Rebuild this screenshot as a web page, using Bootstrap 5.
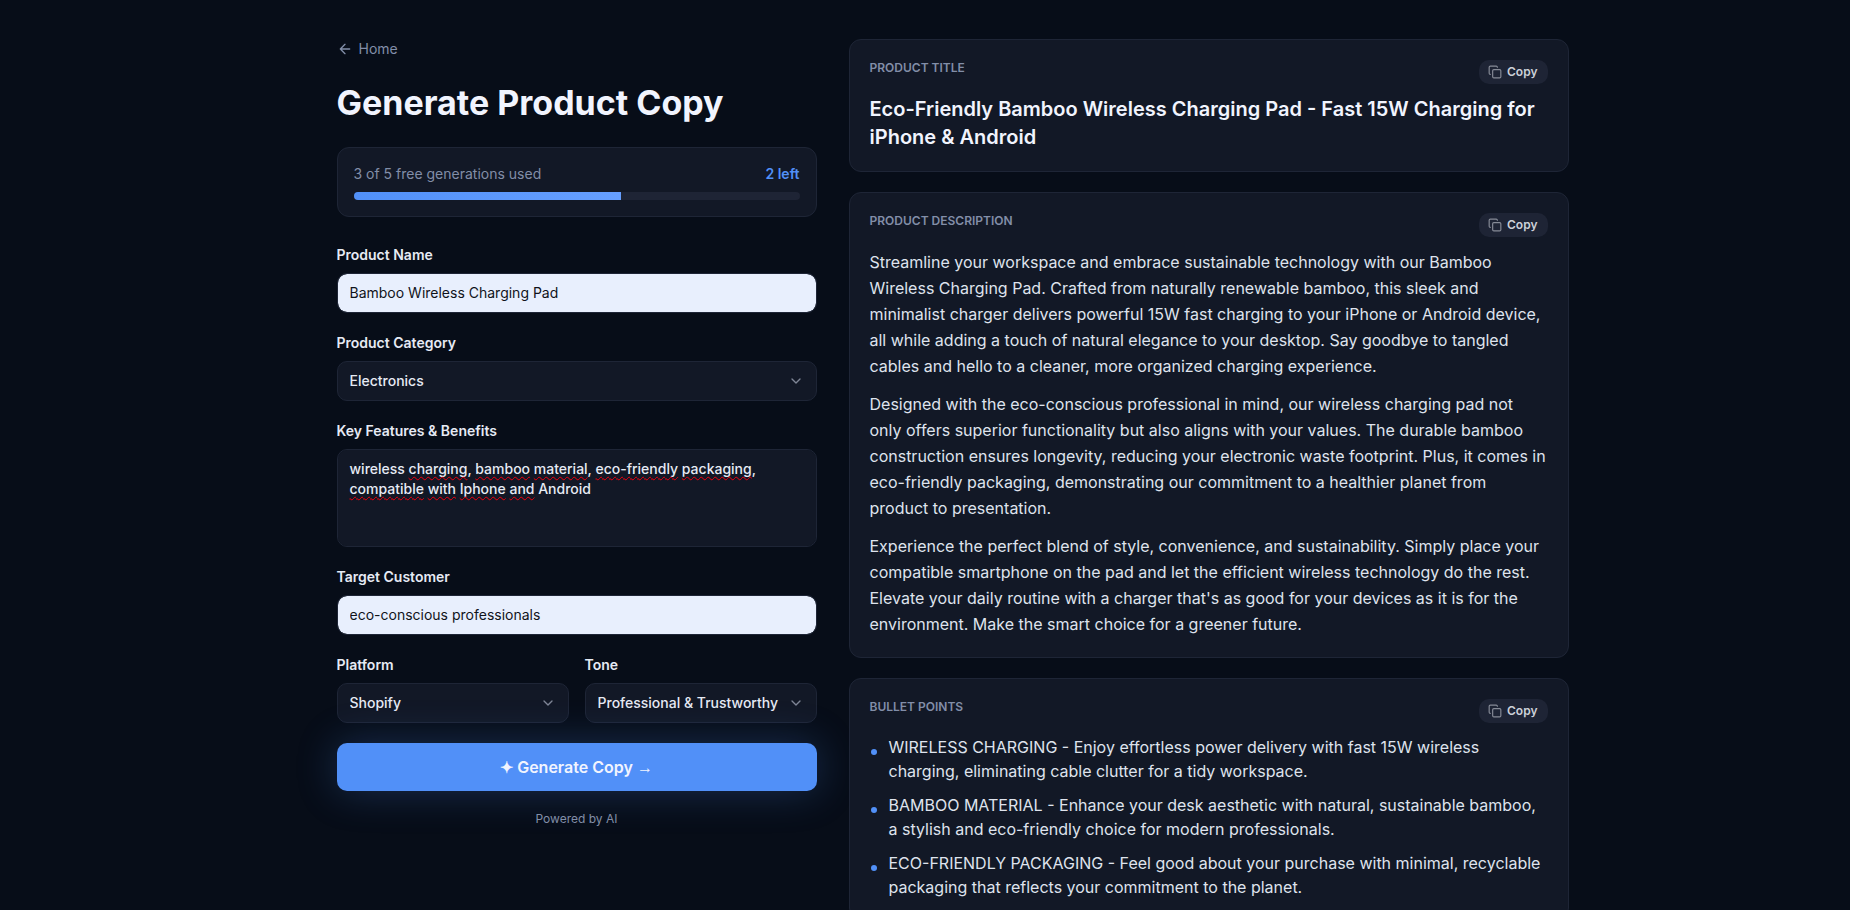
<!DOCTYPE html>
<html lang="en" data-bs-theme="dark">
<head>
<meta charset="utf-8">
<meta name="viewport" content="width=device-width, initial-scale=1">
<title>Generate Product Copy</title>
<link href="https://cdn.jsdelivr.net/npm/bootstrap@5.3.0/dist/css/bootstrap.min.css" rel="stylesheet">
<style>
  :root {
    --page: #070d18;
    --panel: #121826;
    --line: #1e2536;
    --ink: #e6eaf4;
    --dim: #828ea8;
    --accent: #5190f8;
  }
  body { background: var(--page); color: var(--ink); font-family: Inter, "Liberation Sans", sans-serif; font-size: 16px; line-height: 24px; }
  .shell { padding: 39px 24px 40px 79px; }
  .shell-inner { max-width: 1232px; }
  .split { display: grid; grid-template-columns: 2fr 3fr; gap: 32px; align-items: start; }
  .text-dim { color: var(--dim); }
  .fs-sm { font-size: 14px; line-height: 20px; }
  .fs-xs { font-size: 12px; line-height: 16px; }
  .home-link { width: fit-content; color: var(--dim); text-decoration: none; gap: 6px; }
  .page-title { font-size: 34px; line-height: 40px; font-weight: 700; color: #f1f4fe; margin: 24px 0; }
  .panel { background: var(--panel); border: 1px solid var(--line); border-radius: 12px; }
  .usage { padding: 16px; margin-bottom: 28px; }
  .usage .progress { height: 8px; border-radius: 4px; background: #1e2435; }
  .usage .progress-bar { background: linear-gradient(90deg, #5190f8, #669fff); }
  .accent { color: var(--accent); }
  .field-stack { gap: 20px; }
  .form-label { font-size: 14px; line-height: 20px; font-weight: 600; margin-bottom: 8px; display: block; }
  .form-control, .form-select { font-size: 14px; line-height: 20px; padding: 9px 12px; border: 1px solid var(--line); border-radius: 10px; background-color: var(--panel); color: var(--ink); font-weight: 500; }
  .form-select { padding-right: 36px; background-size: 16px 16px; background-position: right 12px center;
    background-image: url("data:image/svg+xml,%3Csvg xmlns='http://www.w3.org/2000/svg' viewBox='0 0 24 24' fill='none' stroke='%237f8696' stroke-width='2' stroke-linecap='round' stroke-linejoin='round'%3E%3Cpath d='m6 9 6 6 6-6'/%3E%3C/svg%3E"); }
  .filled, .filled:focus { background-color: #e8effd; color: #10131a; font-weight: 400; }
  textarea.form-control { height: 98px; resize: none; display: block; }
  .spell-layer { position: absolute; inset: 0; padding: 10px 13px; font-size: 14px; line-height: 20px; font-weight: 500; color: transparent; pointer-events: none; }
  .spell-layer u { text-decoration: underline wavy #f0000c 1px; text-underline-offset: 2px; text-decoration-skip-ink: none; }
  .btn-generate { height: 48px; border: 0; border-radius: 10px; background: var(--accent); color: #f1f4fe; font-size: 16px; font-weight: 600; box-shadow: 0 0 40px rgba(81, 144, 248, .25); }
  .btn-generate:hover { background: #669fff; color: #fff; }
  .arrow { font-family: "Liberation Sans", sans-serif; font-weight: 700; }
  .result { padding: 20px; }
  .result-head { height: 24px; margin-bottom: 12px; }
  .result-head h2 { font-size: 12px; line-height: 16px; font-weight: 600; text-transform: uppercase; color: var(--dim); margin: 0; }
  .btn-copy { height: 24px; padding: 0 10px 0 9px; gap: 5px; border: 0; border-radius: 10px; background: #1e2435; color: #ccd0d9; font-size: 12px; line-height: 16px; font-weight: 600; }
  .btn-copy:hover { background: #2a3146; color: #fff; }
  .product-title { font-size: 20px; line-height: 1.375; font-weight: 600; color: #f1f4fe; margin: 0; }
  .prose { line-height: 26px; gap: 12px; color: #dfe3ed; }
  .prose p { margin: 0; }
  .points { gap: 10px; color: #dfe3ed; }
  .points li { display: flex; gap: 12px; }
  .points li::before { content: ""; flex: none; width: 6px; height: 6px; margin: 14px 0 0 1px; border-radius: 50%; background: var(--accent); }
  @media (max-width: 991px) { .shell { padding: 24px; } .split { grid-template-columns: 1fr; } }
</style>
</head>
<body class="vh-100 overflow-x-hidden">
<svg class="d-none" aria-hidden="true">
  <symbol id="copy" viewBox="0 0 24 24"><g fill="none" stroke="currentColor" stroke-width="2" stroke-linecap="round" stroke-linejoin="round"><rect x="8" y="8" width="14" height="14" rx="2"/><path d="M4 16c-1.1 0-2-.9-2-2V4c0-1.1.9-2 2-2h10c1.1 0 2 .9 2 2"/></g></symbol>
</svg>
<div class="shell">
  <main class="shell-inner split mx-auto">
    <section>
      <a href="#" class="home-link fs-sm d-flex align-items-center">
        <svg width="16" height="16" viewBox="0 0 24 24" fill="none" stroke="currentColor" stroke-width="2" stroke-linecap="round" stroke-linejoin="round" aria-hidden="true"><path d="m12 19-7-7 7-7M19 12H5"/></svg>
        Home
      </a>
      <h1 class="page-title">Generate Product Copy</h1>

      <div class="panel usage fs-sm">
        <div class="d-flex justify-content-between mb-2">
          <span class="text-dim">3 of 5 free generations used</span>
          <span class="accent fw-semibold">2 left</span>
        </div>
        <div class="progress" role="progressbar" aria-label="Generations used" aria-valuenow="60" aria-valuemin="0" aria-valuemax="100">
          <div class="progress-bar" style="width: 60%"></div>
        </div>
      </div>

      <form class="field-stack d-flex flex-column">
        <div>
          <label class="form-label" for="name">Product Name</label>
          <input class="form-control filled" id="name" type="text" value="Bamboo Wireless Charging Pad">
        </div>
        <div>
          <label class="form-label" for="category">Product Category</label>
          <select class="form-select" id="category"><option>Electronics</option></select>
        </div>
        <div>
          <label class="form-label" for="features">Key Features &amp; Benefits</label>
          <div class="position-relative">
            <textarea class="form-control" id="features" spellcheck="false">wireless charging, bamboo material, eco-friendly packaging, compatible with Iphone and Android</textarea>
            <div class="spell-layer" aria-hidden="true">wireless <u>charging</u>, <u>bamboo</u> <u>material</u>, <u>eco-friendly</u> <u>packaging</u>, <u>compatible</u> <u>with</u> <u>Iphone</u> <u>and</u> Android</div>
          </div>
        </div>
        <div>
          <label class="form-label" for="customer">Target Customer</label>
          <input class="form-control filled" id="customer" type="text" value="eco-conscious professionals">
        </div>
        <div class="row gx-3">
          <div class="col-6">
            <label class="form-label" for="platform">Platform</label>
            <select class="form-select" id="platform"><option>Shopify</option></select>
          </div>
          <div class="col-6">
            <label class="form-label" for="tone">Tone</label>
            <select class="form-select" id="tone"><option>Professional &amp; Trustworthy</option></select>
          </div>
        </div>
        <button class="btn btn-generate w-100" type="button">✦ Generate Copy <span class="arrow">→</span></button>
        <p class="fs-xs text-dim text-center mb-0">Powered by AI</p>
      </form>
    </section>

    <section class="d-flex flex-column field-stack">
      <article class="panel result">
        <div class="result-head d-flex justify-content-between">
          <h2>Product Title</h2>
          <button type="button" class="btn btn-copy d-flex align-items-center"><svg width="14" height="14" opacity=".6" aria-hidden="true"><use href="#copy"/></svg>Copy</button>
        </div>
        <p class="product-title">Eco-Friendly Bamboo Wireless Charging Pad - Fast 15W Charging for iPhone &amp; Android</p>
      </article>

      <article class="panel result">
        <div class="result-head d-flex justify-content-between">
          <h2>Product Description</h2>
          <button type="button" class="btn btn-copy d-flex align-items-center"><svg width="14" height="14" opacity=".6" aria-hidden="true"><use href="#copy"/></svg>Copy</button>
        </div>
        <div class="prose d-flex flex-column">
          <p>Streamline your workspace and embrace sustainable technology with our Bamboo Wireless Charging Pad. Crafted from naturally renewable bamboo, this sleek and minimalist charger delivers powerful 15W fast charging to your iPhone or Android device, all while adding a touch of natural elegance to your desktop. Say goodbye to tangled cables and hello to a cleaner, more organized charging experience.</p>
          <p>Designed with the eco-conscious professional in mind, our wireless charging pad not only offers superior functionality but also aligns with your values. The durable bamboo construction ensures longevity, reducing your electronic waste footprint. Plus, it comes in eco-friendly packaging, demonstrating our commitment to a healthier planet from product to presentation.</p>
          <p>Experience the perfect blend of style, convenience, and sustainability. Simply place your compatible smartphone on the pad and let the efficient wireless technology do the rest. Elevate your daily routine with a charger that's as good for your devices as it is for the environment. Make the smart choice for a greener future.</p>
        </div>
      </article>

      <article class="panel result">
        <div class="result-head d-flex justify-content-between">
          <h2>Bullet Points</h2>
          <button type="button" class="btn btn-copy d-flex align-items-center"><svg width="14" height="14" opacity=".6" aria-hidden="true"><use href="#copy"/></svg>Copy</button>
        </div>
        <ul class="points list-unstyled d-flex flex-column mb-0">
          <li>WIRELESS CHARGING - Enjoy effortless power delivery with fast 15W wireless charging, eliminating cable clutter for a tidy workspace.</li>
          <li>BAMBOO MATERIAL - Enhance your desk aesthetic with natural, sustainable bamboo, a stylish and eco-friendly choice for modern professionals.</li>
          <li>ECO-FRIENDLY PACKAGING - Feel good about your purchase with minimal, recyclable packaging that reflects your commitment to the planet.</li>
        </ul>
      </article>
    </section>
  </main>
</div>
<script src="https://cdn.jsdelivr.net/npm/bootstrap@5.3.0/dist/js/bootstrap.bundle.min.js"></script>
</body>
</html>
